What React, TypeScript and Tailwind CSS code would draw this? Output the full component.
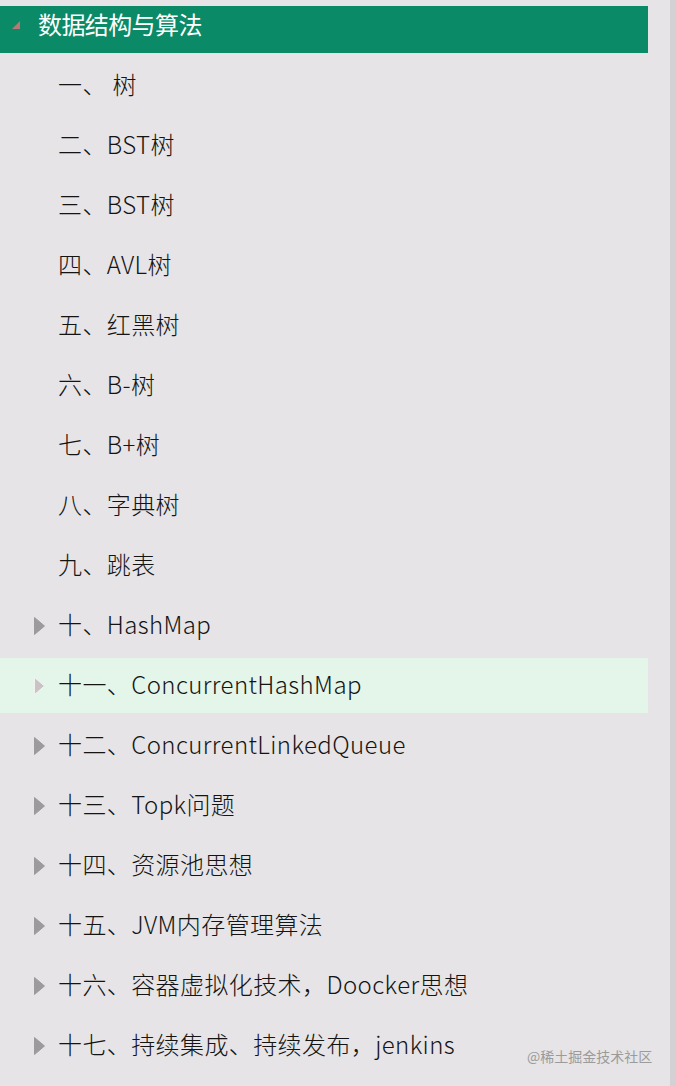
import React from "react";

const rows: { text: string; arrow: boolean; active?: boolean }[] = [
  { text: "一、 树", arrow: false },
  { text: "二、BST树", arrow: false },
  { text: "三、BST树", arrow: false },
  { text: "四、AVL树", arrow: false },
  { text: "五、红黑树", arrow: false },
  { text: "六、B-树", arrow: false },
  { text: "七、B+树", arrow: false },
  { text: "八、字典树", arrow: false },
  { text: "九、跳表", arrow: false },
  { text: "十、HashMap", arrow: true },
  { text: "十一、ConcurrentHashMap", arrow: true, active: true },
  { text: "十二、ConcurrentLinkedQueue", arrow: true },
  { text: "十三、Topk问题", arrow: true },
  { text: "十四、资源池思想", arrow: true },
  { text: "十五、JVM内存管理算法", arrow: true },
  { text: "十六、容器虚拟化技术，Doocker思想", arrow: true },
  { text: "十七、持续集成、持续发布，jenkins", arrow: true },
];

export default function App() {
  return (
    <div
      className="relative w-[676px] h-[1086px] bg-[#e6e4e6] flex overflow-hidden"
      style={{ fontFamily: '"Noto Sans CJK SC", "Noto Sans", sans-serif' }}
    >
      <div className="w-[670px] flex flex-col pt-[6px]">
        <div className="w-[648px] h-[47px] bg-[#0b8a68] flex">
          <svg width="8" height="8" viewBox="0 0 8 8" className="ml-[12px] mt-[15px]">
            <polygon points="8,0 8,8 0,8" fill="#b9786f" />
          </svg>
          <span className="ml-[18px] mt-[6px] text-[24px] leading-[24px] text-white font-normal tracking-[-0.6px]">
            数据结构与算法
          </span>
        </div>
        {rows.map((r, i) => (
          <div
            key={i}
            className={`w-[648px] h-[55px] mt-[5px] flex items-center ${r.active ? "bg-[#e4f5ea]" : ""}`}
          >
            <div className="w-[58px] flex items-center">
              {r.arrow && (
                <svg width="11" height="18" viewBox="0 0 11 18" className="ml-[34px]">
                  <polygon
                    points="0.5,0.5 10.5,9 0.5,17.5"
                    fill={r.active ? "#c8c4c6" : "#9c9a9c"}
                    stroke={r.active ? "#f2f2f2" : "#9c9a9c"}
                    strokeWidth="1"
                  />
                </svg>
              )}
            </div>
            <span className="mt-[-4px] text-[24px] leading-none font-light tracking-[0.4px] text-[#141414] whitespace-pre">
              {r.text}
            </span>
          </div>
        ))}
      </div>
      <div className="w-[6px] bg-[#d3d1d3]" />
      <div className="absolute left-[527px] top-[1049px] text-[14px] leading-none text-[#9b9b9b]">
        @稀土掘金技术社区
      </div>
    </div>
  );
}
